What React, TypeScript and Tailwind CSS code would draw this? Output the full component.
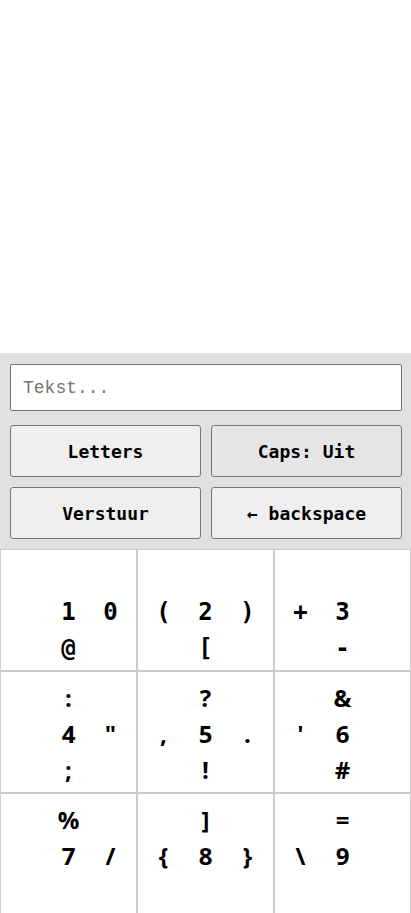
import React from "react";

type Cell = { rows: string[][]; mono: boolean };

const cells: Cell[] = [
  { mono: true, rows: [["", "", ""], ["", "1", "0"], ["", "@", ""]] },
  { mono: true, rows: [["", "", ""], ["(", "2", ")"], ["", "[", ""]] },
  { mono: true, rows: [["", "", ""], ["+", "3", ""], ["", "-", ""]] },
  { mono: false, rows: [["", ":", ""], ["", "4", '"'], ["", ";", ""]] },
  { mono: false, rows: [["", "?", ""], [",", "5", "."], ["", "!", ""]] },
  { mono: false, rows: [["", "&", ""], ["'", "6", ""], ["", "#", ""]] },
  { mono: false, rows: [["", "%", ""], ["", "7", "/"], ["", "", ""]] },
  { mono: false, rows: [["", "]", ""], ["{", "8", "}"], ["", "", ""]] },
  { mono: false, rows: [["", "=", ""], ["\\", "9", ""], ["", "", ""]] },
];

function Key({ cell }: { cell: Cell }) {
  const font = cell.mono
    ? "font-['DejaVu_Sans_Mono',monospace]"
    : "font-['Open_Sans',sans-serif]";
  return (
    <div className="h-[122px] border border-[#cccccc] bg-white flex items-center justify-center">
      <div className={`mt-[4px] grid grid-cols-[42px_42px_42px] grid-rows-[36px_36px_36px] ${font} text-[24px] font-bold text-black`}>
        {cell.rows.flat().map((ch, i) => (
          <span key={i} className="flex items-center justify-center leading-[36px]">
            {ch}
          </span>
        ))}
      </div>
    </div>
  );
}

function Btn({ label, dark }: { label: string; dark?: boolean }) {
  return (
    <button
      className={`h-[52px] rounded-[3px] border border-[#767676] ${
        dark ? "bg-[#e5e5e5]" : "bg-[#efefef]"
      } font-['DejaVu_Sans_Mono',monospace] text-[18px] font-bold text-black`}
    >
      {label}
    </button>
  );
}

export default function App() {
  return (
    <div className="w-[411px] bg-white">
      <div className="h-[353px]" />
      <div className="bg-[#e0e0e0] pt-[11px] pb-[10px] pl-[10px] pr-[9px] flex flex-col gap-[14px]">
        <input
          className="h-[47px] w-full rounded-[2px] border border-[#767676] bg-white px-[12px] font-['Liberation_Mono',monospace] text-[18px] text-black placeholder:text-[#757575] outline-none"
          placeholder="Tekst..."
        />
        <div className="grid grid-cols-2 gap-[10px]">
          <Btn label="Letters" />
          <Btn label="Caps: Uit" dark />
          <Btn label="Verstuur" />
          <Btn label="← backspace" />
        </div>
      </div>
      <div className="grid grid-cols-3">
        {cells.map((c, i) => (
          <Key key={i} cell={c} />
        ))}
      </div>
    </div>
  );
}
